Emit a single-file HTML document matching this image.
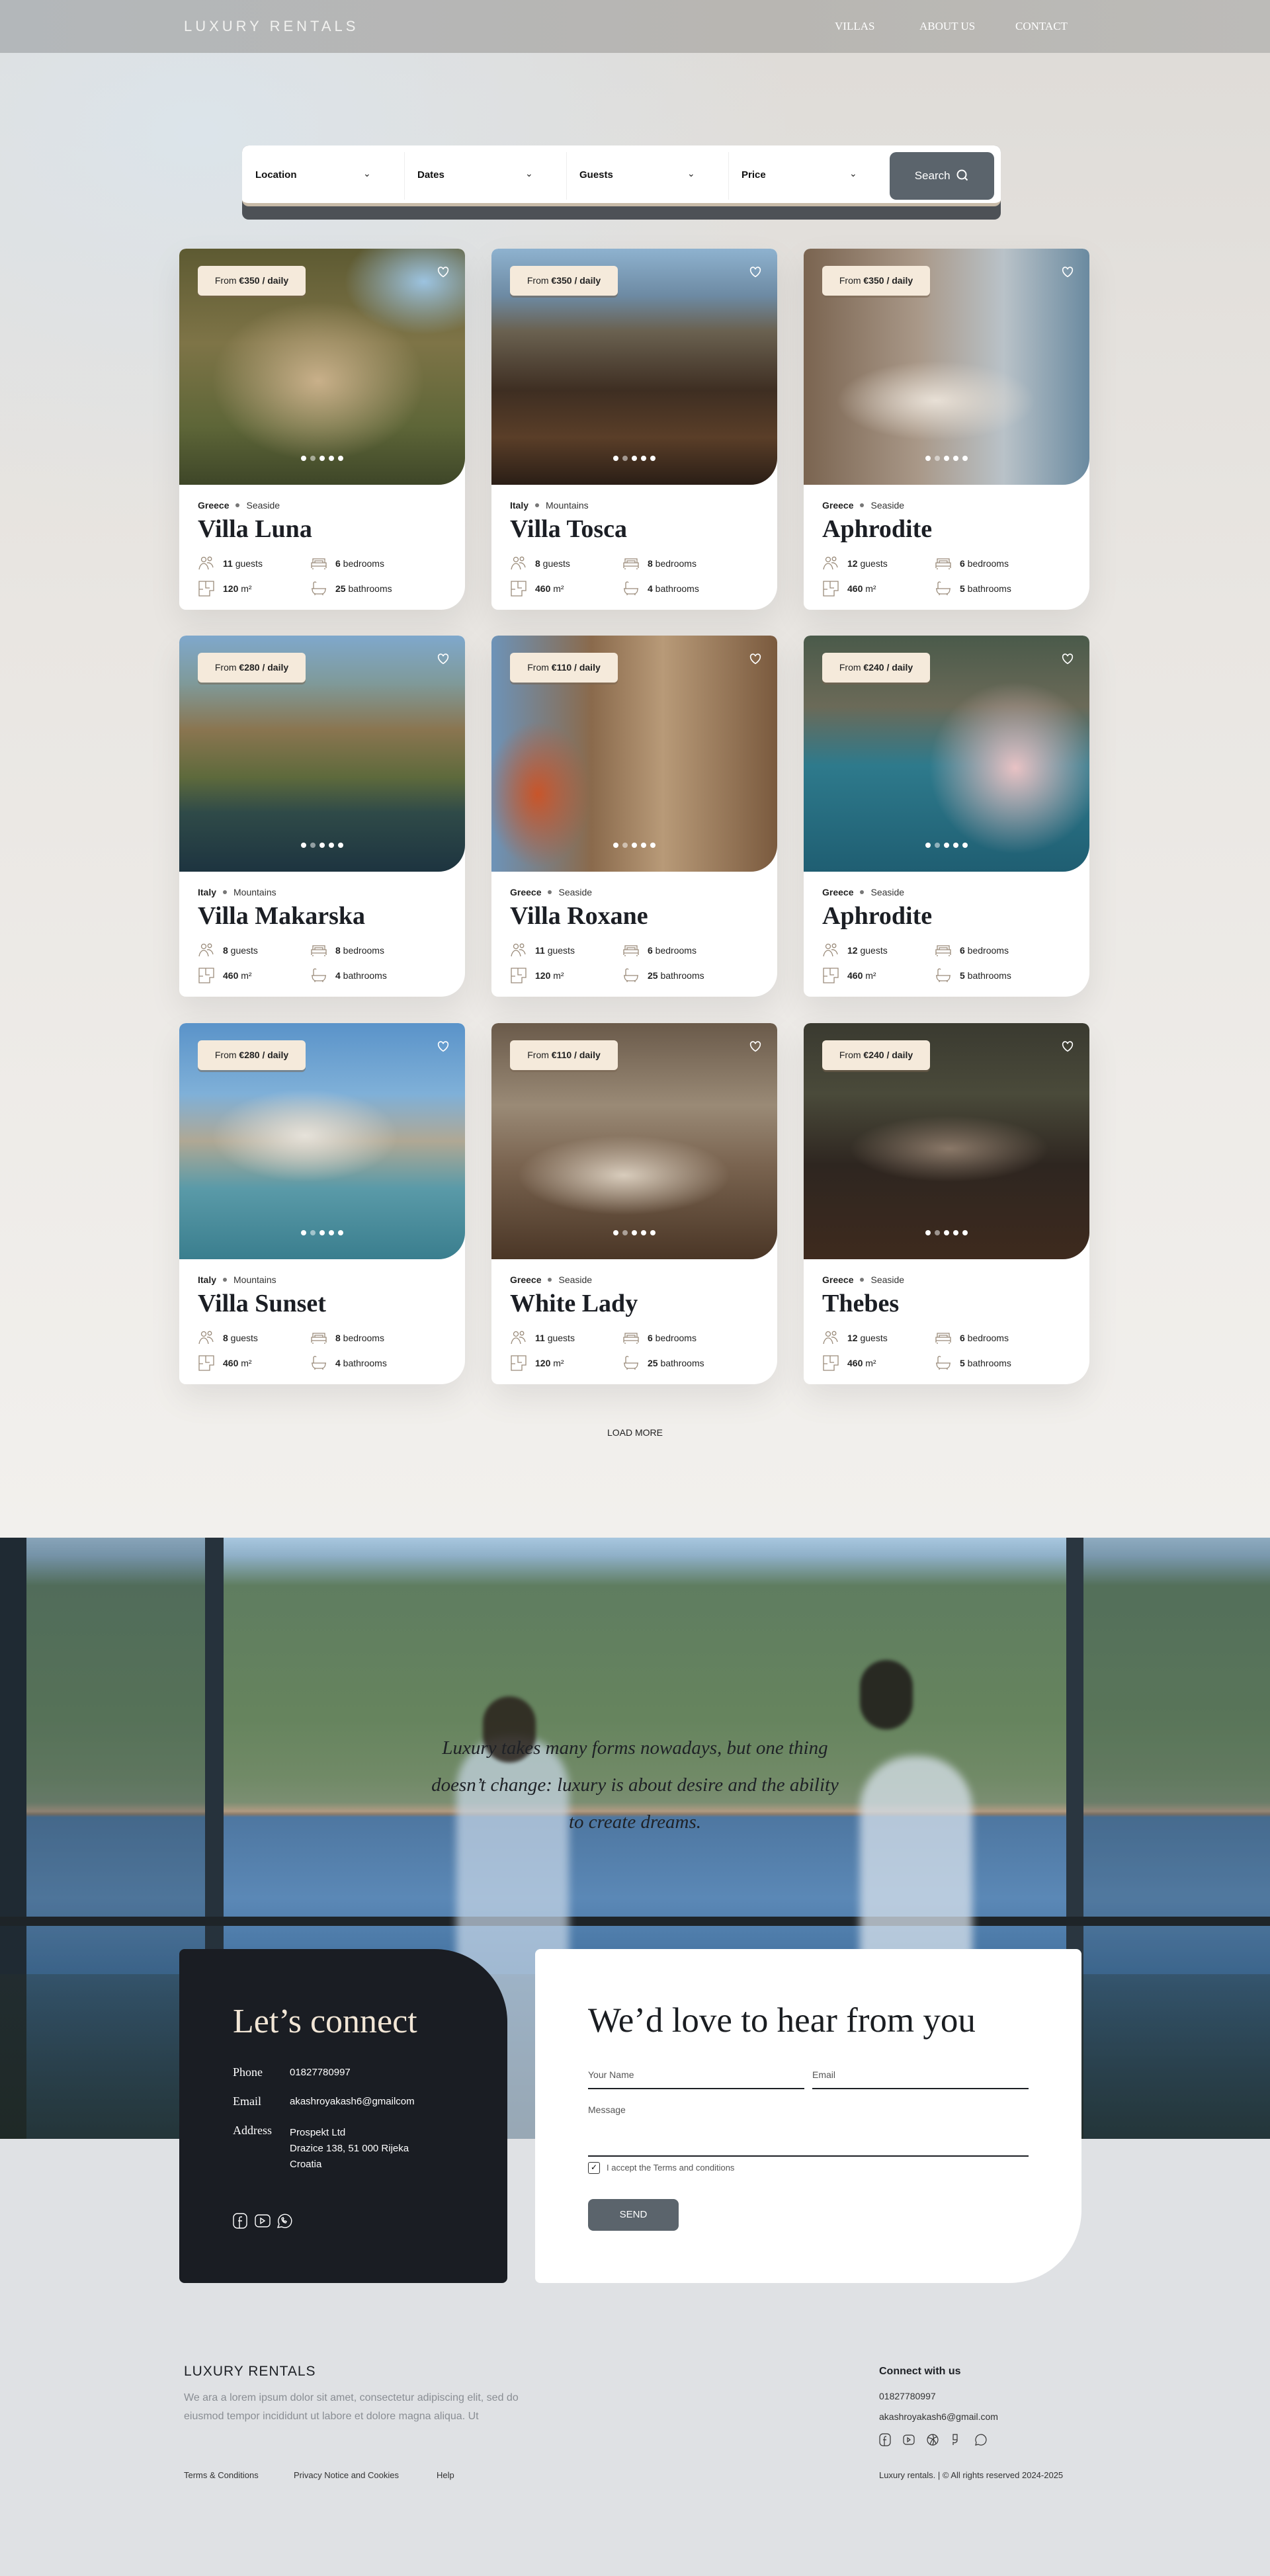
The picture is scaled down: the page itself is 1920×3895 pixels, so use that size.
<!DOCTYPE html>
<html><head><meta charset="utf-8"><style>
*{box-sizing:border-box;margin:0;padding:0}
body{width:1920px;height:3895px;position:relative;font-family:"Liberation Sans",sans-serif;background:#dfe1e4;overflow:hidden}
.top{position:absolute;left:0;top:0;width:1920px;height:2325px;background:radial-gradient(ellipse 900px 600px at 300px 200px,#dce4ea 0%,rgba(220,228,234,0) 100%),linear-gradient(180deg,#dedbd7 0%,#e9e6e2 40%,#f2f0ed 100%)}
.nav{position:absolute;left:0;top:0;width:1920px;height:80px;background:linear-gradient(90deg,#b3b7ba,#b8b6b2 60%,#bcbbb8)}
.logo{position:absolute;left:278px;top:27px;color:#f2f2f0;font-size:22px;letter-spacing:5px}
.nl{position:absolute;top:30px;color:#fff;font-family:"Liberation Serif",serif;font-size:17px}
.search{position:absolute;left:366px;top:220px;width:1147px;height:112px;border-radius:10px;background:#4d5156}
.sw{position:absolute;left:0;top:0;width:1147px;height:92px;background:#fff;border-radius:10px;border-bottom:5px solid #c8bba8}
.fld{position:absolute;top:36px;font-size:15px;font-weight:bold;color:#111}
.chev{position:absolute;top:34px;font-size:14px;color:#222}
.div{position:absolute;top:10px;width:1px;height:72px;background:#eee}
.sbtn{position:absolute;left:979px;top:10px;width:158px;height:72px;background:#5b646c;border-radius:10px;color:#fff;font-size:17px;line-height:72px;text-align:center}
.card{position:absolute;width:432px;height:546px;background:#fff;border-radius:10px 10px 36px 10px;box-shadow:0 20px 50px rgba(0,0,0,.08);overflow:hidden}
.img{position:absolute;left:0;top:0;width:432px;height:357px;border-radius:10px 10px 40px 0}
.badge{position:absolute;left:28px;top:26px;width:163px;height:45px;background:#f5eadb;border-radius:6px;font-size:14px;line-height:45px;text-align:center;color:#222;box-shadow:0 3px 0 rgba(120,100,80,.5)}
.heart{position:absolute;right:22px;top:24px}
.dots{position:absolute;left:0;width:100%;top:308px;text-align:center}
.dots i{display:inline-block;width:8px;height:8px;border-radius:50%;background:#fff;margin:0 3px}
.dots i.o{background:rgba(255,255,255,.5)}
.loc{position:absolute;left:28px;top:380px;font-size:14px;color:#333}
.loc b{color:#222}
.loc span{display:inline-block;width:6px;height:6px;border-radius:50%;background:#777;margin:0 10px 2px}
.ttl{position:absolute;left:28px;top:402px;font-family:"Liberation Serif",serif;font-weight:bold;font-size:38px;color:#1b1e24}
.st{position:absolute;font-size:14px;color:#222;display:flex;align-items:center;gap:12px}
.st svg{width:26px;height:26px}
.hero{position:absolute;left:0;top:2325px;width:1920px;height:909px;overflow:hidden;background:linear-gradient(180deg,#a8c7df 0%,#8fb0c8 3%,#5f7d60 8%,#66845e 30%,#718a67 40%,#7b8e72 44%,#b09a82 45.5%,#8b7c6b 46%,#4e77a1 46.5%,#5b88b6 60%,#3c6b99 75%,#2e4d6a 100%)}
.q{position:absolute;left:0;width:1920px;text-align:center;font-family:"Liberation Serif",serif;font-style:italic;font-size:29px;color:#1e2126;line-height:56px}
.dark{position:absolute;left:271px;top:2947px;width:496px;height:505px;background:#1a1d23;border-radius:8px 110px 8px 8px;color:#fff}
.white{position:absolute;left:809px;top:2947px;width:826px;height:505px;background:#fff;border-radius:8px 8px 110px 8px}
.lab{position:absolute;left:81px;font-family:"Liberation Serif",serif;font-size:18px;color:#fff}
.val{position:absolute;left:167px;font-size:15px;color:#fff}
.fl{position:absolute;font-size:14px;color:#555}
.ln{position:absolute;height:2px;background:#1c1f24}
.foot{position:absolute;font-size:14px;color:#333}
</style></head><body>
<div class="top"></div>
<div class="nav"><div class="logo">LUXURY RENTALS</div>
<div class="nl" style="left:1262px">VILLAS</div><div class="nl" style="left:1390px">ABOUT US</div><div class="nl" style="left:1535px">CONTACT</div></div>
<div class="search"><div class="sw">
<div class="fld" style="left:20px">Location</div><div class="chev" style="left:183px">&#8964;</div><div class="div" style="left:245px"></div>
<div class="fld" style="left:265px">Dates</div><div class="chev" style="left:428px">&#8964;</div><div class="div" style="left:490px"></div>
<div class="fld" style="left:510px">Guests</div><div class="chev" style="left:673px">&#8964;</div><div class="div" style="left:735px"></div>
<div class="fld" style="left:755px">Price</div><div class="chev" style="left:918px">&#8964;</div>
<div class="sbtn">Search <svg width="20" height="20" viewBox="0 0 20 20" style="vertical-align:-4px;margin-left:4px"><circle cx="9" cy="9" r="6.5" fill="none" stroke="#fff" stroke-width="2"/><path d="M13.5 13.5l4 4" stroke="#fff" stroke-width="2"/></svg></div>
</div></div>

<svg width="0" height="0" style="position:absolute"><defs>
<symbol id="g" viewBox="0 0 26 26"><circle cx="9" cy="7" r="3.5" fill="none" stroke="#9a8b7a" stroke-width="1.3"/><circle cx="18" cy="6" r="2.8" fill="none" stroke="#9a8b7a" stroke-width="1.3"/><path d="M2 22c1-6 4-9 7-9s6 3 7 9M14 12c4-1 8 2 9 7" fill="none" stroke="#9a8b7a" stroke-width="1.3"/></symbol>
<symbol id="b" viewBox="0 0 26 26"><path d="M4 12V6h18v6M2 20v-8h22v8M2 17h22M4 20v2M22 20v2M7 12V9h12v3" fill="none" stroke="#9a8b7a" stroke-width="1.3"/></symbol>
<symbol id="a" viewBox="0 0 26 26"><path d="M2 2h22v14h-6v8H2zM12 2v10h6M2 14h6" fill="none" stroke="#9a8b7a" stroke-width="1.3"/></symbol>
<symbol id="t" viewBox="0 0 26 26"><path d="M2 13h22M3 13c0 6 3 8 6 8h8c3 0 6-2 6-8M7 21v2M19 21v2M5 13V5c0-2 3-3 4-1" fill="none" stroke="#9a8b7a" stroke-width="1.3"/></symbol>
<symbol id="h" viewBox="0 0 24 24"><path d="M12 20s-8-5-8-11a4 4 0 0 1 8-1 4 4 0 0 1 8 1c0 6-8 11-8 11z" fill="none" stroke="#fff" stroke-width="1.8"/></symbol>
</defs></svg>

<div class="card" style="left:271px;top:376px"><div class="img" style="background:radial-gradient(ellipse 120px 80px at 370px 50px,#9cc3e0,transparent),radial-gradient(ellipse 160px 120px at 210px 200px,#c9b08a,transparent),linear-gradient(180deg,#5d5a32 0%,#7e7447 40%,#5e6638 75%,#3e4628 100%)"></div><div class="badge">From <b>€350 / daily</b></div><svg class="heart" width="22" height="22"><use href="#h"/></svg><div class="dots"><i></i><i class="o"></i><i></i><i></i><i></i></div>
<div class="loc"><b>Greece</b><span></span>Seaside</div><div class="ttl">Villa Luna</div>
<div class="st" style="left:28px;top:463px"><svg><use href="#g"/></svg><span><b>11</b> guests</span></div><div class="st" style="left:198px;top:463px"><svg><use href="#b"/></svg><span><b>6</b> bedrooms</span></div>
<div class="st" style="left:28px;top:501px"><svg><use href="#a"/></svg><span><b>120</b> m²</span></div><div class="st" style="left:198px;top:501px"><svg><use href="#t"/></svg><span><b>25</b> bathrooms</span></div></div>

<div class="card" style="left:743px;top:376px"><div class="img" style="background:linear-gradient(180deg,#8eb2cf 0%,#6d8aa3 20%,#6a6150 35%,#3e2e22 60%,#5a3e28 80%,#2a1e16 100%)"></div><div class="badge">From <b>€350 / daily</b></div><svg class="heart" width="22" height="22"><use href="#h"/></svg><div class="dots"><i></i><i class="o"></i><i></i><i></i><i></i></div>
<div class="loc"><b>Italy</b><span></span>Mountains</div><div class="ttl">Villa Tosca</div>
<div class="st" style="left:28px;top:463px"><svg><use href="#g"/></svg><span><b>8</b> guests</span></div><div class="st" style="left:198px;top:463px"><svg><use href="#b"/></svg><span><b>8</b> bedrooms</span></div>
<div class="st" style="left:28px;top:501px"><svg><use href="#a"/></svg><span><b>460</b> m²</span></div><div class="st" style="left:198px;top:501px"><svg><use href="#t"/></svg><span><b>4</b> bathrooms</span></div></div>

<div class="card" style="left:1215px;top:376px"><div class="img" style="background:radial-gradient(ellipse 150px 60px at 200px 230px,#e8e0d6,transparent),linear-gradient(90deg,#7a6450 0%,#a99888 40%,#b9c2c8 70%,#6a8aa0 100%)"></div><div class="badge">From <b>€350 / daily</b></div><svg class="heart" width="22" height="22"><use href="#h"/></svg><div class="dots"><i></i><i class="o"></i><i></i><i></i><i></i></div>
<div class="loc"><b>Greece</b><span></span>Seaside</div><div class="ttl">Aphrodite</div>
<div class="st" style="left:28px;top:463px"><svg><use href="#g"/></svg><span><b>12</b> guests</span></div><div class="st" style="left:198px;top:463px"><svg><use href="#b"/></svg><span><b>6</b> bedrooms</span></div>
<div class="st" style="left:28px;top:501px"><svg><use href="#a"/></svg><span><b>460</b> m²</span></div><div class="st" style="left:198px;top:501px"><svg><use href="#t"/></svg><span><b>5</b> bathrooms</span></div></div>

<div class="card" style="left:271px;top:961px"><div class="img" style="background:linear-gradient(180deg,#7fa8cc 0%,#7f9a9a 20%,#8a7550 40%,#5e6a3c 60%,#2f4a48 75%,#1d3440 100%)"></div><div class="badge">From <b>€280 / daily</b></div><svg class="heart" width="22" height="22"><use href="#h"/></svg><div class="dots"><i></i><i class="o"></i><i></i><i></i><i></i></div>
<div class="loc"><b>Italy</b><span></span>Mountains</div><div class="ttl">Villa Makarska</div>
<div class="st" style="left:28px;top:463px"><svg><use href="#g"/></svg><span><b>8</b> guests</span></div><div class="st" style="left:198px;top:463px"><svg><use href="#b"/></svg><span><b>8</b> bedrooms</span></div>
<div class="st" style="left:28px;top:501px"><svg><use href="#a"/></svg><span><b>460</b> m²</span></div><div class="st" style="left:198px;top:501px"><svg><use href="#t"/></svg><span><b>4</b> bathrooms</span></div></div>

<div class="card" style="left:743px;top:961px"><div class="img" style="background:radial-gradient(ellipse 80px 110px at 70px 240px,#c8552a,transparent),linear-gradient(90deg,#6d93b8 0%,#8a6a4c 35%,#b89a78 60%,#7a5a3e 100%)"></div><div class="badge">From <b>€110 / daily</b></div><svg class="heart" width="22" height="22"><use href="#h"/></svg><div class="dots"><i></i><i class="o"></i><i></i><i></i><i></i></div>
<div class="loc"><b>Greece</b><span></span>Seaside</div><div class="ttl">Villa Roxane</div>
<div class="st" style="left:28px;top:463px"><svg><use href="#g"/></svg><span><b>11</b> guests</span></div><div class="st" style="left:198px;top:463px"><svg><use href="#b"/></svg><span><b>6</b> bedrooms</span></div>
<div class="st" style="left:28px;top:501px"><svg><use href="#a"/></svg><span><b>120</b> m²</span></div><div class="st" style="left:198px;top:501px"><svg><use href="#t"/></svg><span><b>25</b> bathrooms</span></div></div>

<div class="card" style="left:1215px;top:961px"><div class="img" style="background:radial-gradient(ellipse 130px 130px at 320px 200px,#e8c2c4,transparent),linear-gradient(180deg,#4a5a4a 0%,#6b6a58 30%,#2e7a8c 55%,#1f5e72 100%)"></div><div class="badge">From <b>€240 / daily</b></div><svg class="heart" width="22" height="22"><use href="#h"/></svg><div class="dots"><i></i><i class="o"></i><i></i><i></i><i></i></div>
<div class="loc"><b>Greece</b><span></span>Seaside</div><div class="ttl">Aphrodite</div>
<div class="st" style="left:28px;top:463px"><svg><use href="#g"/></svg><span><b>12</b> guests</span></div><div class="st" style="left:198px;top:463px"><svg><use href="#b"/></svg><span><b>6</b> bedrooms</span></div>
<div class="st" style="left:28px;top:501px"><svg><use href="#a"/></svg><span><b>460</b> m²</span></div><div class="st" style="left:198px;top:501px"><svg><use href="#t"/></svg><span><b>5</b> bathrooms</span></div></div>

<div class="card" style="left:271px;top:1547px"><div class="img" style="background:radial-gradient(ellipse 140px 70px at 190px 170px,#e6e2da,transparent),linear-gradient(180deg,#5a93c9 0%,#7fb0d8 30%,#b0a894 50%,#5a9aa8 70%,#3a7e8e 100%)"></div><div class="badge">From <b>€280 / daily</b></div><svg class="heart" width="22" height="22"><use href="#h"/></svg><div class="dots"><i></i><i class="o"></i><i></i><i></i><i></i></div>
<div class="loc"><b>Italy</b><span></span>Mountains</div><div class="ttl">Villa Sunset</div>
<div class="st" style="left:28px;top:463px"><svg><use href="#g"/></svg><span><b>8</b> guests</span></div><div class="st" style="left:198px;top:463px"><svg><use href="#b"/></svg><span><b>8</b> bedrooms</span></div>
<div class="st" style="left:28px;top:501px"><svg><use href="#a"/></svg><span><b>460</b> m²</span></div><div class="st" style="left:198px;top:501px"><svg><use href="#t"/></svg><span><b>4</b> bathrooms</span></div></div>

<div class="card" style="left:743px;top:1547px"><div class="img" style="background:radial-gradient(ellipse 160px 60px at 200px 230px,#d8ccbc,transparent),linear-gradient(180deg,#6a5a4a 0%,#9a8a76 35%,#7a6450 60%,#4a3626 100%)"></div><div class="badge">From <b>€110 / daily</b></div><svg class="heart" width="22" height="22"><use href="#h"/></svg><div class="dots"><i></i><i class="o"></i><i></i><i></i><i></i></div>
<div class="loc"><b>Greece</b><span></span>Seaside</div><div class="ttl">White Lady</div>
<div class="st" style="left:28px;top:463px"><svg><use href="#g"/></svg><span><b>11</b> guests</span></div><div class="st" style="left:198px;top:463px"><svg><use href="#b"/></svg><span><b>6</b> bedrooms</span></div>
<div class="st" style="left:28px;top:501px"><svg><use href="#a"/></svg><span><b>120</b> m²</span></div><div class="st" style="left:198px;top:501px"><svg><use href="#t"/></svg><span><b>25</b> bathrooms</span></div></div>

<div class="card" style="left:1215px;top:1547px"><div class="img" style="background:radial-gradient(ellipse 150px 50px at 220px 190px,#8a7868,transparent),linear-gradient(180deg,#3a3a30 0%,#4a4a3a 30%,#2e2620 60%,#3e2a1e 100%)"></div><div class="badge">From <b>€240 / daily</b></div><svg class="heart" width="22" height="22"><use href="#h"/></svg><div class="dots"><i></i><i class="o"></i><i></i><i></i><i></i></div>
<div class="loc"><b>Greece</b><span></span>Seaside</div><div class="ttl">Thebes</div>
<div class="st" style="left:28px;top:463px"><svg><use href="#g"/></svg><span><b>12</b> guests</span></div><div class="st" style="left:198px;top:463px"><svg><use href="#b"/></svg><span><b>6</b> bedrooms</span></div>
<div class="st" style="left:28px;top:501px"><svg><use href="#a"/></svg><span><b>460</b> m²</span></div><div class="st" style="left:198px;top:501px"><svg><use href="#t"/></svg><span><b>5</b> bathrooms</span></div></div>

<div style="position:absolute;left:0;width:1920px;top:2158px;text-align:center;font-size:14px;color:#222">LOAD MORE</div>

<div class="hero">
<div style="position:absolute;left:0;top:0;width:40px;height:909px;background:#1f2a33"></div>
<div style="position:absolute;left:40px;top:0;width:290px;height:909px;background:rgba(40,60,70,.25)"></div>
<div style="position:absolute;left:310px;top:0;width:28px;height:909px;background:#26323c"></div>
<div style="position:absolute;left:1612px;top:0;width:26px;height:909px;background:#2a3640"></div>
<div style="position:absolute;left:1638px;top:0;width:282px;height:909px;background:rgba(40,60,70,.2)"></div>
<div style="position:absolute;left:0;top:573px;width:1920px;height:14px;background:#1e2428"></div>
<div style="position:absolute;left:0;top:660px;width:1920px;height:250px;background:linear-gradient(180deg,rgba(40,50,40,.3),rgba(30,40,30,.6))"></div>
<div style="position:absolute;left:690px;top:300px;width:170px;height:640px;border-radius:80px 80px 0 0;background:#c9d8e8;opacity:.7;filter:blur(6px)"></div>
<div style="position:absolute;left:1300px;top:330px;width:170px;height:600px;border-radius:80px 80px 0 0;background:#d8e2ec;opacity:.75;filter:blur(6px)"></div>
<div style="position:absolute;left:730px;top:240px;width:80px;height:100px;border-radius:40px;background:#2a221c;opacity:.85;filter:blur(3px)"></div>
<div style="position:absolute;left:1300px;top:185px;width:80px;height:105px;border-radius:40px;background:#1e1a18;opacity:.85;filter:blur(3px)"></div>
<div class="q" style="top:290px">Luxury takes many forms nowadays, but one thing<br>doesn’t change: luxury is about desire and the ability<br>to create dreams.</div>
</div>

<div class="dark">
<div style="position:absolute;left:81px;top:80px;font-family:'Liberation Serif',serif;font-size:52px;color:#f2e6d6">Let’s connect</div>
<div class="lab" style="top:176px">Phone</div><div class="val" style="top:178px">01827780997</div>
<div class="lab" style="top:220px">Email</div><div class="val" style="top:222px">akashroyakash6@gmailcom</div>
<div class="lab" style="top:264px">Address</div><div class="val" style="top:266px;line-height:24px">Prospekt Ltd<br>Drazice 138, 51 000 Rijeka<br>Croatia</div>
<svg style="position:absolute;left:81px;top:398px" width="110" height="26" viewBox="0 0 110 26" fill="none" stroke="#fff" stroke-width="1.4"><rect x="1" y="2" width="20" height="22" rx="6"/><path d="M14 7h-2a2 2 0 0 0-2 2v15M8 13h6"/><rect x="34" y="4" width="22" height="18" rx="5"/><path d="M42 9l6 4-6 4z"/><path d="M68 23l2-5a10 10 0 1 1 4 4z"/><path d="M74 9c0 4 3 7 6 7l1-2-2-1-1 1c-1-1-2-2-2-3l1-1-1-2z"/></svg>
</div>
<div class="white">
<div style="position:absolute;left:80px;top:78px;font-family:'Liberation Serif',serif;font-size:53px;color:#1a1d21">We’d love to hear from you</div>
<div class="fl" style="left:80px;top:182px">Your Name</div><div class="fl" style="left:419px;top:182px">Email</div>
<div class="ln" style="left:80px;top:210px;width:327px"></div><div class="ln" style="left:419px;top:210px;width:327px"></div>
<div class="fl" style="left:80px;top:235px">Message</div>
<div class="ln" style="left:80px;top:312px;width:666px"></div>
<div style="position:absolute;left:80px;top:322px;width:18px;height:18px;border:1.5px solid #333;border-radius:3px;font-size:12px;line-height:15px;text-align:center">✓</div>
<div class="fl" style="left:108px;top:323px;font-size:13px">I accept the Terms and conditions</div>
<div style="position:absolute;left:80px;top:378px;width:137px;height:48px;background:#5b646c;border-radius:8px;color:#fff;font-size:15px;line-height:48px;text-align:center">SEND</div>
</div>

<div style="position:absolute;left:278px;top:3574px;font-size:21px;letter-spacing:1px;color:#1e2126">LUXURY RENTALS</div>
<div style="position:absolute;left:278px;top:3612px;font-size:16px;color:#8a8e94;line-height:28px">We ara a lorem ipsum dolor sit amet, consectetur adipiscing elit, sed do<br>eiusmod tempor incididunt ut labore et dolore magna aliqua. Ut</div>
<div style="position:absolute;left:1329px;top:3577px;font-size:16px;font-weight:bold;color:#1e2126">Connect with us</div>
<div class="foot" style="left:1329px;top:3615px">01827780997</div>
<div class="foot" style="left:1329px;top:3646px">akashroyakash6@gmail.com</div>
<svg style="position:absolute;left:1329px;top:3679px" width="170" height="20" viewBox="0 0 170 20" fill="none" stroke="#333" stroke-width="1.2"><rect x="1" y="1" width="16" height="18" rx="5"/><path d="M11 5h-1a2 2 0 0 0-2 2v12M6 10h5"/><rect x="37" y="3" width="16" height="14" rx="4"/><path d="M43 7l4 3-4 3z"/><circle cx="81" cy="10" r="8"/><path d="M74 7c5 0 10 3 12 9M77 17c2-6 6-11 10-11M81 2c2 5 2 11 0 16"/><path d="M112 2h6v8h-6zM112 10h6a4 4 0 0 1-6 4v4"/><path d="M146 18l1-4a8 8 0 1 1 3 3z"/></svg>
<div class="foot" style="left:278px;top:3735px;font-size:13px">Terms &amp; Conditions</div>
<div class="foot" style="left:444px;top:3735px;font-size:13px">Privacy Notice and Cookies</div>
<div class="foot" style="left:660px;top:3735px;font-size:13px">Help</div>
<div class="foot" style="left:1329px;top:3735px;font-size:13px">Luxury rentals. | © All rights reserved 2024-2025</div>
</body></html>
